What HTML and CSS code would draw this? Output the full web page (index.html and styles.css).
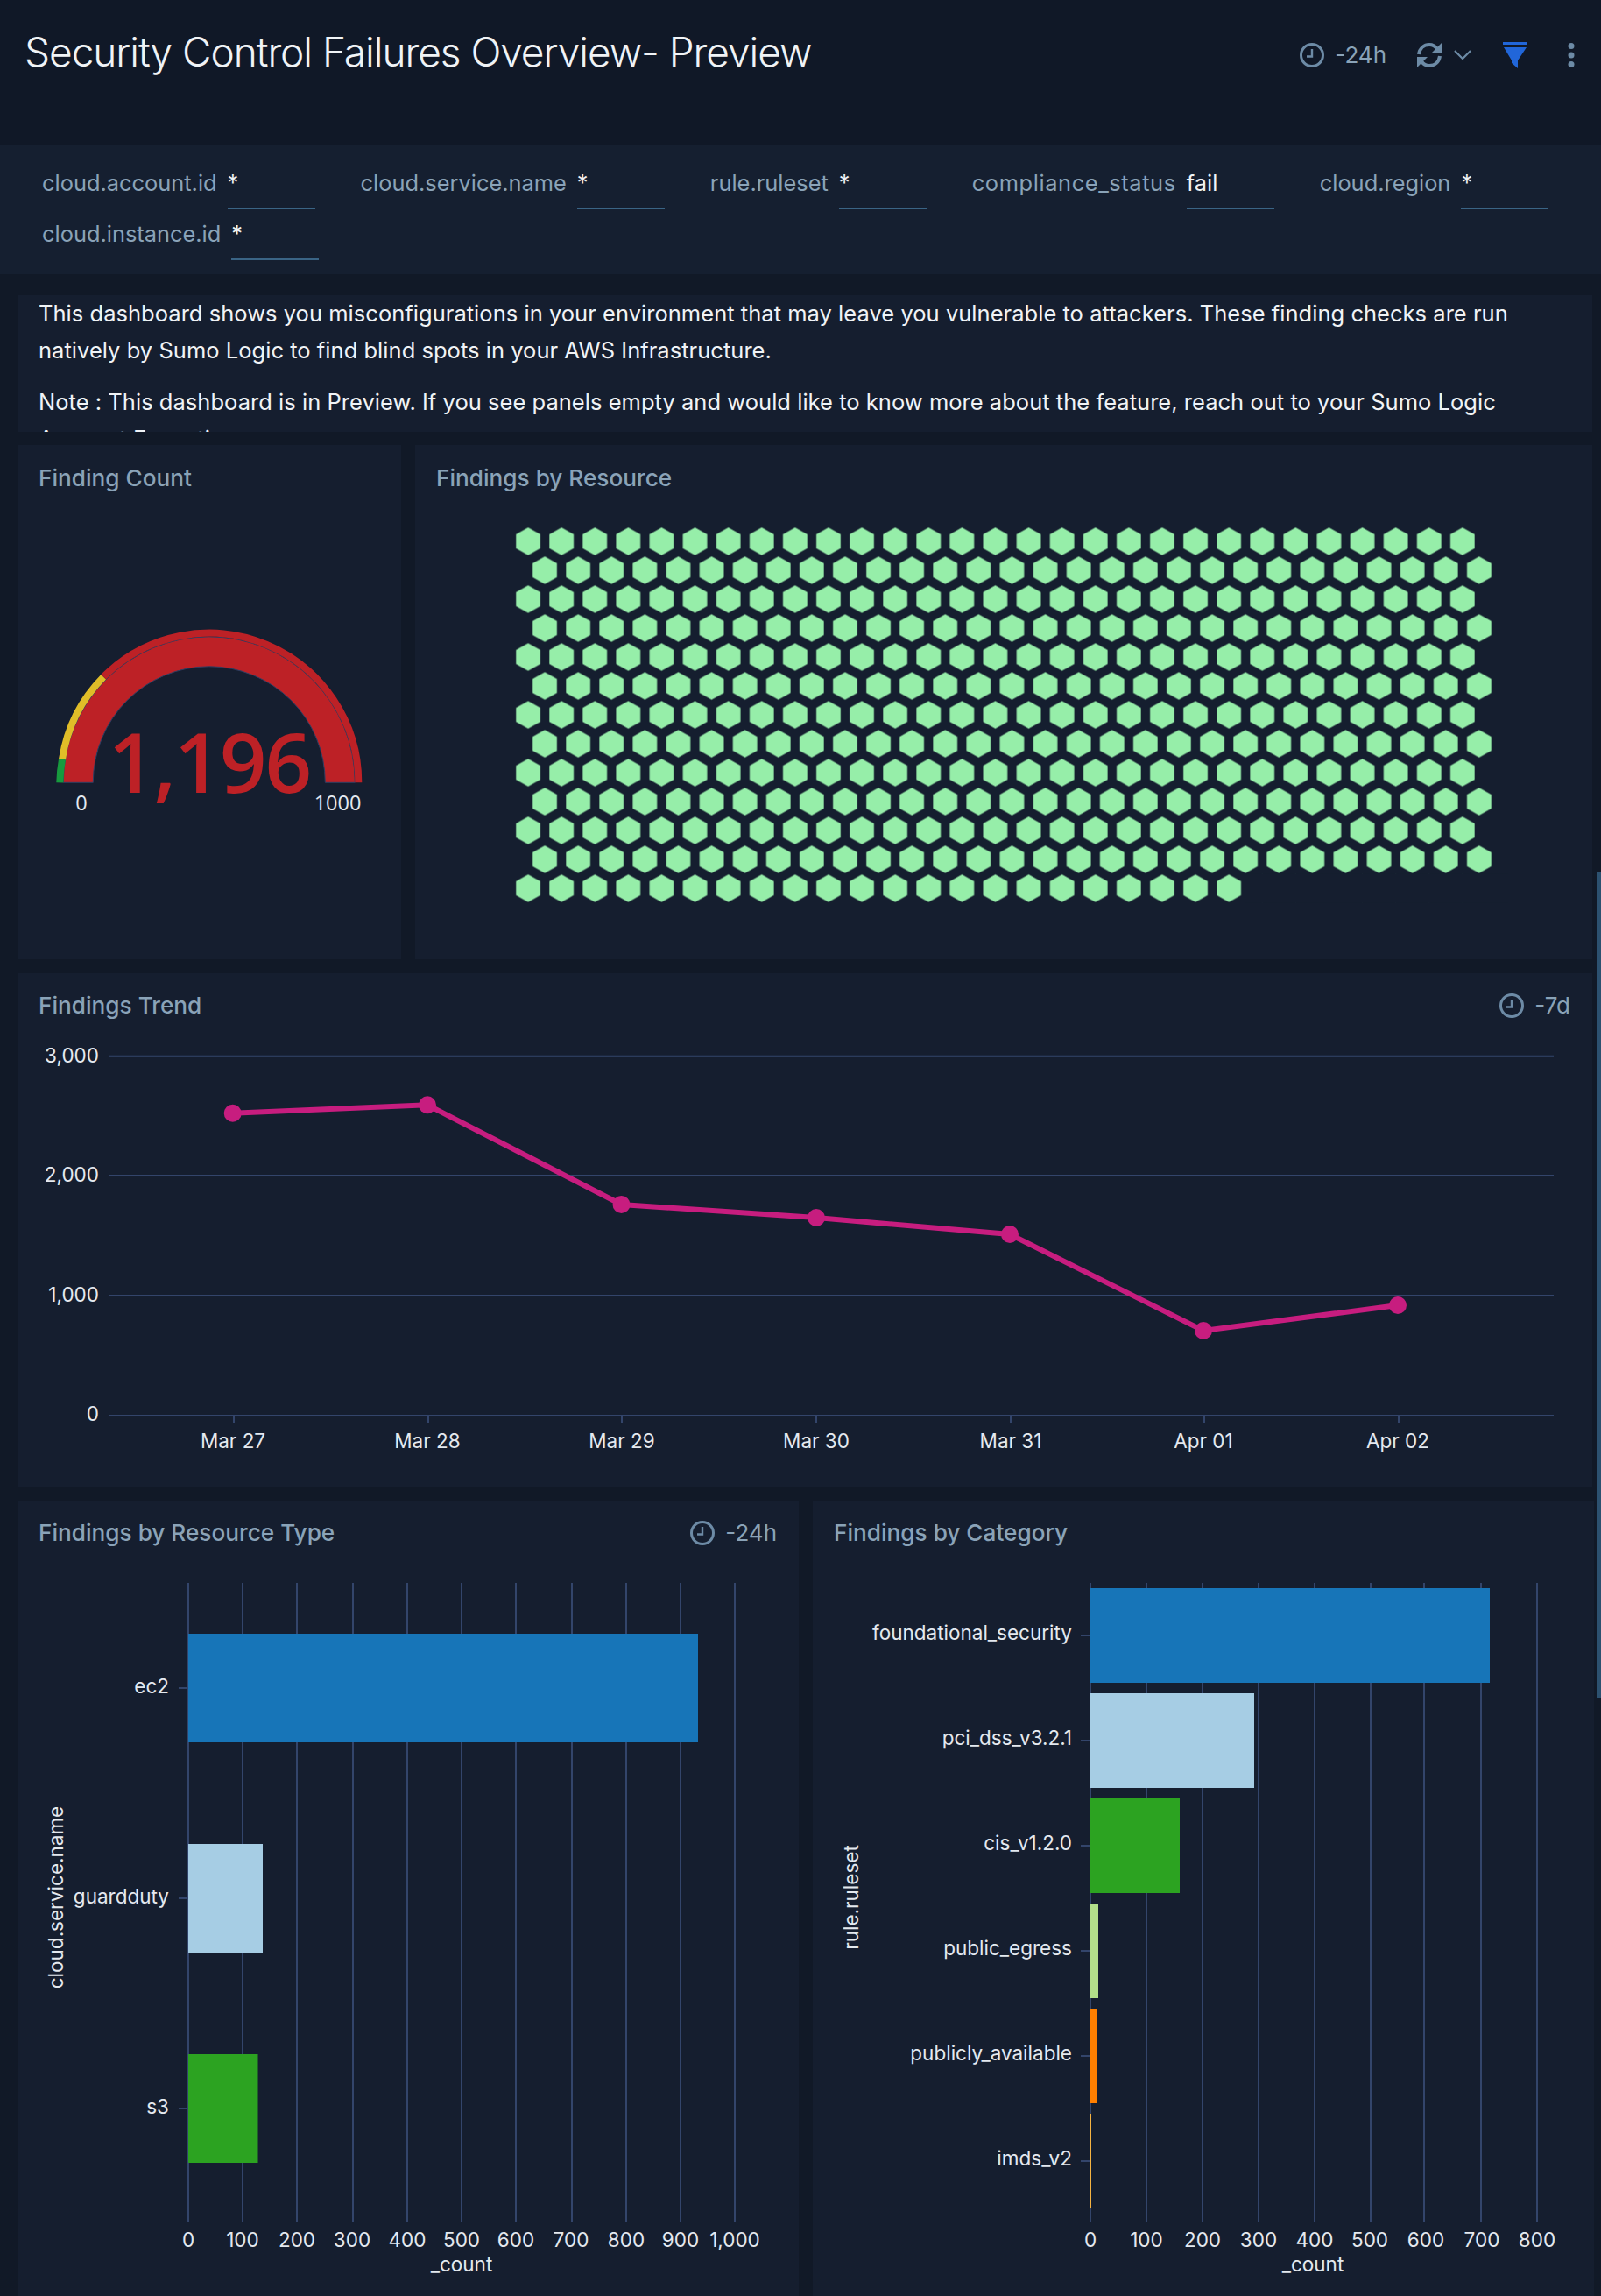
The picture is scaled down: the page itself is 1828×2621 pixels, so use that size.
FILE: index.html
```html
<!DOCTYPE html>
<html lang="en">

<head>
    <meta charset="UTF-8">
    <meta name="viewport" content="width=device-width, initial-scale=1.0">
    <title>Security Control Failures Overview- Preview</title>
    <link rel="stylesheet" href="styles.css">
</head>

<body>
    <svg class="defs" width="0" height="0">
        <symbol id="clock" viewBox="0 0 28 28">
            <circle cx="14" cy="14" r="12.5" fill="none" stroke="#6d8ba6" stroke-width="3" />
            <path d="M14 7V15.5H8" fill="none" stroke="#6d8ba6" stroke-width="2.4" />
        </symbol>
    </svg>

    <header class="top">
        <h1 class="page-title">Security Control Failures Overview- Preview</h1>
        <div class="actions">
            <svg class="ic"><use href="#clock" /></svg>
            <span class="range range-top">-24h</span>
            <svg class="ic-refresh" viewBox="0 0 30 30">
                <path d="M3 14C4 7 9 3 15 3C19 3 22 5 24 8" fill="none" stroke="#6d8ba6" stroke-width="4" />
                <path d="M29 1V13H17Z" fill="#6d8ba6" />
                <path d="M27 16C26 23 21 27 15 27C11 27 8 25 6 22" fill="none" stroke="#6d8ba6" stroke-width="4" />
                <path d="M1 29V17H13Z" fill="#6d8ba6" />
            </svg>
            <svg class="ic-chevron" viewBox="0 0 20 12">
                <path d="M1 1L10 10L19 1" fill="none" stroke="#6d8ba6" stroke-width="2.2" />
            </svg>
            <svg class="ic-funnel" viewBox="0 0 28 30">
                <path d="M0 0H28V3H0ZM1 6H27L17 21V30L10 24V21Z" fill="#2166d9" />
            </svg>
            <svg class="ic-dots" viewBox="0 0 8 28">
                <circle cx="4" cy="3.5" r="3.5" fill="#6d8ba6" />
                <circle cx="4" cy="14" r="3.5" fill="#6d8ba6" />
                <circle cx="4" cy="24.5" r="3.5" fill="#6d8ba6" />
            </svg>
        </div>
    </header>

    <section class="filters">
        <div class="filter"><span class="filter-name">cloud.account.id</span><span class="filter-value">*</span></div>
        <div class="filter"><span class="filter-name">cloud.service.name</span><span class="filter-value">*</span></div>
        <div class="filter"><span class="filter-name">rule.ruleset</span><span class="filter-value">*</span></div>
        <div class="filter"><span class="filter-name filter-name-wide">compliance_status</span><span class="filter-value">fail</span></div>
        <div class="filter"><span class="filter-name">cloud.region</span><span class="filter-value">*</span></div>
        <div class="filter"><span class="filter-name">cloud.instance.id</span><span class="filter-value">*</span></div>
    </section>

    <main class="board">
        <div class="note">
            <p>This dashboard shows you misconfigurations in your environment that may leave you vulnerable to attackers. These finding checks are run natively by Sumo Logic to find blind spots in your AWS Infrastructure.</p>
            <p>Note : This dashboard is in Preview. If you see panels empty and would like to know more about the feature, reach out to your Sumo Logic Account Executive.</p>
        </div>

        <div class="row row-one">
            <section class="panel panel-gauge">
                <div class="panel-head"><h2 class="panel-title">Finding Count</h2></div>
                <svg class="chart" viewBox="20 582 438 513">
                    <path d="M72.3 893.3A166.5 166.5 0 0 1 405.3 893.3H371.3A132.5 132.5 0 0 0 106.3 893.3Z" fill="#bd2126" stroke="#2e3f63" stroke-width="1" />
                    <path d="M68.3 893.3A170.5 170.5 0 0 1 71 866.6" fill="none" stroke="#179a3e" stroke-width="8" />
                    <path d="M71 866.6A170.5 170.5 0 0 1 118.2 772.7" fill="none" stroke="#e0bd28" stroke-width="8" />
                    <path d="M118.2 772.7A170.5 170.5 0 0 1 409.3 893.3" fill="none" stroke="#bd2126" stroke-width="8" />
                    <text class="gauge-value" x="239" y="905">1,196</text>
                    <text class="gauge-tick" x="93" y="925">0</text>
                    <text class="gauge-tick" x="385.5" y="925">1000</text>
                </svg>
            </section>
            <section class="panel panel-hex">
                <div class="panel-head"><h2 class="panel-title">Findings by Resource</h2></div>
                <svg class="chart" viewBox="474 582 1344 513">
                    <defs>
                        <pattern id="hex-even" x="584" y="601.5" width="38.1" height="66" patternUnits="userSpaceOnUse">
                            <polygon points="19.05,0.8 32.9,8.6 32.9,24.4 19.05,32.2 5.2,24.4 5.2,8.6" fill="#96eea9" />
                        </pattern>
                        <pattern id="hex-odd" x="603" y="634.5" width="38.1" height="66" patternUnits="userSpaceOnUse">
                            <polygon points="19.05,0.8 32.9,8.6 32.9,24.4 19.05,32.2 5.2,24.4 5.2,8.6" fill="#96eea9" />
                        </pattern>
                    </defs>
                    <rect x="584" y="601.5" width="1104.9" height="429" fill="url(#hex-even)" />
                    <rect x="603" y="634.5" width="1104.9" height="363" fill="url(#hex-odd)" />
                    <rect x="1422" y="997.5" width="300" height="33" fill="#151e2f" />
                </svg>
            </section>
        </div>

        <section class="panel panel-trend">
            <div class="panel-head">
                <h2 class="panel-title">Findings Trend</h2>
                <div class="panel-range"><svg class="ic"><use href="#clock" /></svg><span class="range">-7d</span></div>
            </div>
            <svg class="chart" viewBox="20 1185 1798 512">
                <g class="grid">
                    <path d="M124 1205.7H1774M124 1342H1774M124 1479H1774M124 1616H1774" />
                    <path d="M267 1616V1624M489 1616V1624M710 1616V1624M932 1616V1624M1154 1616V1624M1375 1616V1624M1597 1616V1624" />
                </g>
                <text class="tick tick-y" x="113" y="1212.5">3,000</text>
                <text class="tick tick-y" x="113" y="1348.5">2,000</text>
                <text class="tick tick-y" x="113" y="1485.5">1,000</text>
                <text class="tick tick-y" x="113" y="1622">0</text>
                <text class="tick tick-x" x="266" y="1652.5">Mar 27</text>
                <text class="tick tick-x" x="488" y="1652.5">Mar 28</text>
                <text class="tick tick-x" x="710" y="1652.5">Mar 29</text>
                <text class="tick tick-x" x="932" y="1652.5">Mar 30</text>
                <text class="tick tick-x" x="1154" y="1652.5">Mar 31</text>
                <text class="tick tick-x" x="1374" y="1652.5">Apr 01</text>
                <text class="tick tick-x" x="1596" y="1652.5">Apr 02</text>
                <polyline class="trend-line" points="265.7,1270.7 488,1261.3 709.5,1375 932,1390 1153,1409 1374,1519 1596,1490" />
                <g class="trend-dots">
                    <circle cx="265.7" cy="1270.7" r="10" />
                    <circle cx="488" cy="1261.3" r="10" />
                    <circle cx="709.5" cy="1375" r="10" />
                    <circle cx="932" cy="1390" r="10" />
                    <circle cx="1153" cy="1409" r="10" />
                    <circle cx="1374" cy="1519" r="10" />
                    <circle cx="1596" cy="1490" r="10" />
                </g>
            </svg>
        </section>

        <div class="row row-three">
            <section class="panel panel-half">
                <div class="panel-head">
                    <h2 class="panel-title">Findings by Resource Type</h2>
                    <div class="panel-range"><svg class="ic"><use href="#clock" /></svg><span class="range">-24h</span></div>
                </div>
                <svg class="chart" viewBox="20 1787 892 834">
                    <g class="grid">
                        <path d="M215 1807V2537M277 1807V2537M339 1807V2537M403 1807V2537M465 1807V2537M527 1807V2537M589 1807V2537M653 1807V2537M715 1807V2537M777 1807V2537M839 1807V2537" />
                        <path d="M204 1927H215M204 2167H215M204 2407H215" />
                    </g>
                    <rect x="215" y="1865" width="582" height="124" fill="#1775b8" />
                    <rect x="215" y="2105" width="85" height="124" fill="#a6cde4" />
                    <rect x="215" y="2345" width="79.5" height="124" fill="#2ca321" />
                    <text class="tick tick-y" x="193" y="1933">ec2</text>
                    <text class="tick tick-y" x="193" y="2172.5">guardduty</text>
                    <text class="tick tick-y" x="193" y="2412.5">s3</text>
                    <text class="tick tick-x" x="215" y="2565">0</text>
                    <text class="tick tick-x" x="277" y="2565">100</text>
                    <text class="tick tick-x" x="339" y="2565">200</text>
                    <text class="tick tick-x" x="402" y="2565">300</text>
                    <text class="tick tick-x" x="465" y="2565">400</text>
                    <text class="tick tick-x" x="527" y="2565">500</text>
                    <text class="tick tick-x" x="589" y="2565">600</text>
                    <text class="tick tick-x" x="652" y="2565">700</text>
                    <text class="tick tick-x" x="715" y="2565">800</text>
                    <text class="tick tick-x" x="777" y="2565">900</text>
                    <text class="tick tick-x" x="839" y="2565">1,000</text>
                    <text class="tick tick-x" x="527" y="2593">_count</text>
                    <text class="tick tick-x" transform="translate(72 2166) rotate(-90)">cloud.service.name</text>
                </svg>
            </section>
            <section class="panel panel-half">
                <div class="panel-head"><h2 class="panel-title">Findings by Category</h2></div>
                <svg class="chart" viewBox="928 1787 892 834">
                    <g class="grid">
                        <path d="M1245 1807V2537M1309 1807V2537M1373 1807V2537M1437 1807V2537M1501 1807V2537M1565 1807V2537M1626 1807V2537M1691 1807V2537M1755 1807V2537" />
                        <path d="M1234 1867H1245M1234 1987H1245M1234 2107H1245M1234 2227H1245M1234 2347H1245M1234 2467H1245" />
                    </g>
                    <rect x="1245" y="1813" width="456" height="108" fill="#1775b8" />
                    <rect x="1245" y="1933" width="187" height="108" fill="#a6cde4" />
                    <rect x="1245" y="2053" width="102" height="108" fill="#2ca321" />
                    <rect x="1245" y="2173" width="9" height="108" fill="#b2df8a" />
                    <rect x="1245" y="2293" width="8" height="108" fill="#ff7f00" />
                    <rect x="1245" y="2413" width="1" height="108" fill="#f5b342" />
                    <text class="tick tick-y" x="1224" y="1872">foundational_security</text>
                    <text class="tick tick-y" x="1224" y="1992">pci_dss_v3.2.1</text>
                    <text class="tick tick-y" x="1224" y="2112">cis_v1.2.0</text>
                    <text class="tick tick-y" x="1224" y="2232">public_egress</text>
                    <text class="tick tick-y" x="1224" y="2352">publicly_available</text>
                    <text class="tick tick-y" x="1224" y="2472">imds_v2</text>
                    <text class="tick tick-x" x="1245" y="2565">0</text>
                    <text class="tick tick-x" x="1309" y="2565">100</text>
                    <text class="tick tick-x" x="1373" y="2565">200</text>
                    <text class="tick tick-x" x="1437" y="2565">300</text>
                    <text class="tick tick-x" x="1501" y="2565">400</text>
                    <text class="tick tick-x" x="1564" y="2565">500</text>
                    <text class="tick tick-x" x="1628" y="2565">600</text>
                    <text class="tick tick-x" x="1692" y="2565">700</text>
                    <text class="tick tick-x" x="1755" y="2565">800</text>
                    <text class="tick tick-x" x="1499" y="2593">_count</text>
                    <text class="tick tick-x" transform="translate(980 2166) rotate(-90)">rule.ruleset</text>
                </svg>
            </section>
        </div>
    </main>

    <div class="scrollbar"></div>
</body>

</html>
```

FILE: styles.css
```css
html,
body {
    margin: 0;
    height: 2621px;
    overflow: hidden;
}

body {
    position: relative;
    background-color: #111927;
    color: #f0f3f6;
    font-family: Inter, "Liberation Sans", sans-serif;
}

.defs {
    position: absolute;
}

/* top bar */
.top {
    height: 165px;
    box-sizing: border-box;
    padding: 29px 30px 0 28px;
    display: flex;
    justify-content: space-between;
    background-color: #101827;
}

.page-title {
    margin: 0;
    font-size: 46px;
    font-weight: 300;
    line-height: 60px;
    letter-spacing: -1.05px;
}

.actions {
    display: flex;
    align-items: center;
    height: 28px;
    margin-top: 20px;
}

.ic {
    width: 28px;
    height: 28px;
    flex: none;
}

.range {
    margin-left: 12px;
    color: #8aa3b8;
    font-size: 26px;
    line-height: 28px;
}

.ic-refresh {
    width: 30px;
    height: 30px;
    margin-left: 34px;
}

.ic-chevron {
    width: 20px;
    height: 12px;
    margin-left: 13px;
}

.ic-funnel {
    width: 28px;
    height: 30px;
    margin-left: 36px;
}

.ic-dots {
    width: 8px;
    height: 28px;
    margin-left: 46px;
}

/* filter bar */
.filters {
    height: 148px;
    box-sizing: border-box;
    padding: 32px 48px 0;
    display: flex;
    flex-wrap: wrap;
    align-content: flex-start;
    gap: 16px 52px;
    background-color: #151f30;
}

.filter {
    display: flex;
    height: 42px;
    gap: 12px;
    font-size: 25.4px;
    line-height: 24px;
}

.filter-name {
    color: #8aa3b8;
}

.filter-name-wide {
    letter-spacing: 0.6px;
}

.filter-value {
    width: 100px;
    border-bottom: 2px solid #3a6485;
    box-sizing: border-box;
}

/* dashboard */
.board {
    padding: 24px 10px 0 20px;
    display: flex;
    flex-direction: column;
    gap: 16px;
}

.note {
    height: 156px;
    margin-bottom: -1px;
    box-sizing: border-box;
    padding: 0 40px 0 24px;
    overflow: hidden;
    background-color: #151e2f;
    font-size: 25.5px;
    letter-spacing: 0.03px;
    line-height: 42px;
}

.note p {
    margin: 0 0 17px;
}

.row {
    display: flex;
    gap: 16px;
}

.row-one {
    height: 587px;
}

.row-three {
    height: 908px;
    margin-right: -2px;
}

.panel {
    display: flex;
    flex-direction: column;
    background-color: #151e2f;
}

.panel-gauge {
    width: 438px;
}

.panel-hex {
    flex: 1;
}

.panel-trend {
    height: 586px;
}

.panel-half {
    flex: 1;
}

.panel-head {
    flex: none;
    height: 74px;
    box-sizing: border-box;
    padding: 0 25px 0 24px;
    display: flex;
    align-items: center;
    justify-content: space-between;
}

.panel-title {
    margin: 0;
    color: #8aa3b8;
    font-size: 26.2px;
    font-weight: 500;
}

.panel-trend .panel-title,
.row-three .panel-title {
    margin-bottom: 2px;
}

.panel-range {
    display: flex;
    align-items: center;
}

.chart {
    display: block;
    flex: 1;
    width: 100%;
    min-height: 0;
}

/* chart parts */
.grid path {
    fill: none;
    stroke: #33456b;
    stroke-width: 2;
}

.tick {
    fill: #e4e9ef;
    font-size: 22.5px;
}

.tick-y {
    text-anchor: end;
}

.tick-x {
    text-anchor: middle;
}

.trend-line {
    fill: none;
    stroke: #c71d7f;
    stroke-width: 6;
}

.trend-dots circle {
    fill: #c71d7f;
}

.gauge-value {
    fill: #bd2126;
    font-family: "Open Sans", sans-serif;
    font-size: 94px;
    font-weight: 600;
    letter-spacing: -2px;
    text-anchor: middle;
}

.gauge-tick {
    fill: #e4e9ef;
    font-family: "Open Sans", sans-serif;
    font-size: 23.5px;
    text-anchor: middle;
}

.scrollbar {
    position: absolute;
    top: 995px;
    right: 0;
    width: 4px;
    height: 943px;
    background-color: #2c5170;
}
```
